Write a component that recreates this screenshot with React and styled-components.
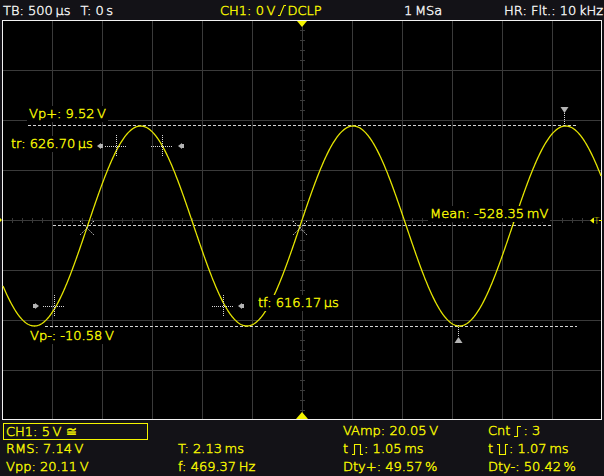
import React from 'react';
import styled, {createGlobalStyle} from 'styled-components';

const YELLOW = '#f4f400';
const TRACE = '#e4e400';
const GRID = '#3a3a3a';
const DOT = '#d4d4d4';
const MARK = '#b4b4b4';
const PANEL = '#131217';
const T = '\u2009'; // thin space between value and unit

// trace model: sine around the mean level, in screen pixels
const MEAN_Y = 226;
const AMP = 100;
const PERIOD = 212.5;
const PHASE = 87.5;
const traceY = x => MEAN_Y - AMP * Math.sin((2 * Math.PI * (x - PHASE)) / PERIOD);

const tracePath = (() => {
  let d = '';
  for (let x = 3; x <= 601; x += 0.5) {
    d += (x === 3 ? 'M' : 'L') + x + ' ' + traceY(x).toFixed(2) + ' ';
  }
  return d;
})();

const range = (from, to, step) => {
  const out = [];
  for (let v = from; v <= to; v += step) out.push(v);
  return out;
};

const GlobalStyle = createGlobalStyle`
  html, body {
    margin: 0;
    padding: 0;
    background: ${PANEL};
  }
  body {
    font-family: "DejaVu Sans", "Liberation Sans", sans-serif;
    font-weight: 300;
    -webkit-text-stroke: 0.45px currentColor;
  }
`;

const Screen = styled.div`
  width: 604px;
  height: 476px;
  display: flex;
  flex-direction: column;
  background: ${PANEL};
  overflow: hidden;
`;

const TopBar = styled.div`
  height: 20px;
  display: grid;
  grid-template-columns: 217px 184px 100px 1fr;
  align-items: center;
  padding-left: 3px;
  font-size: 13px;
  color: #f0f0f0;
  white-space: nowrap;
`;

const TopItem = styled.div`
  display: flex;
  align-items: center;
  color: ${p => p.$color || '#f0f0f0'};
`;

const Gap = styled.span`
  display: inline-block;
  width: ${p => p.$w}px;
`;

const Plot = styled.div`
  position: relative;
  height: 401px;
  background: ${PANEL};

  & > svg {
    display: block;
  }
`;

const Readout = styled.div`
  position: absolute;
  left: ${p => p.$x - 2}px;
  top: ${p => p.$y - 28}px;
  height: 16px;
  line-height: 16px;
  padding: 0 2px;
  background: #000;
  color: ${YELLOW};
  font-size: 13px;
  white-space: nowrap;
`;

const Panel = styled.div`
  flex: 1;
  display: grid;
  grid-template-columns: 172px 165px 145px 1fr;
  grid-auto-rows: 18px;
  padding: 1px 0 0 3px;
  font-size: 13px;
  color: ${YELLOW};
  white-space: nowrap;
`;

const Cell = styled.div`
  display: flex;
  align-items: center;
  padding-left: ${p => (p.$flush ? 0 : 3)}px;
  line-height: 18px;
`;

const ChannelBox = styled.div`
  width: 145px;
  height: 17px;
  box-sizing: border-box;
  border: 1px solid ${YELLOW};
  padding-left: 2px;
  line-height: 15px;
  display: flex;
  align-items: center;
`;

const Glyph = styled.svg`
  width: ${p => p.$w || 9}px;
  height: 11px;
  margin: 0 ${p => p.$right ?? 1}px 0 ${p => p.$left ?? 1}px;
  overflow: visible;
`;

const Slope = () => (
  <Glyph viewBox="0 0 8 11" $w={8} $left={3} $right={1}>
    <path d="M0 10.5 H2 L6 0.5 H8" fill="none" stroke={YELLOW} strokeWidth="1.1" />
  </Glyph>
);

const Edge = () => (
  <Glyph viewBox="0 0 8 11" $w={8} $left={4} $right={1}>
    <path d="M0 10.5 H3.5 V0.5 H7" fill="none" stroke={YELLOW} strokeWidth="1.1" />
  </Glyph>
);

const Pulse = ({invert}) => (
  <Glyph viewBox="0 0 11 11" $w={11} $left={4} $right={1}>
    <path
      d={invert ? 'M0 0.5 H2.5 V10.5 H8.5 V0.5 H11' : 'M0 10.5 H2.5 V0.5 H8.5 V10.5 H11'}
      fill="none"
      stroke={YELLOW}
      strokeWidth="1.1"
    />
  </Glyph>
);

// little gray pointer used on cursor ends
const Pointer = ({x, y, dir}) => {
  const s = dir === 'left' ? 1 : -1;
  return (
    <g fill={MARK}>
      <path d={`M${x} ${y} L${x + 4 * s} ${y - 3} L${x + 4 * s} ${y + 3} Z`} />
      <rect x={dir === 'left' ? x + 4 : x - 6} y={y - 2} width="2" height="4" />
    </g>
  );
};

const Cross = ({x, y, w = 11, h = 11}) => (
  <g stroke={DOT} strokeWidth="1" strokeDasharray="1 1" fill="none">
    <line x1={x - w} y1={y + 0.5} x2={x + w} y2={y + 0.5} />
    <line x1={x + 0.5} y1={y - h} x2={x + 0.5} y2={y + h} />
  </g>
);

const Ex = ({x, y}) => (
  <g stroke={DOT} strokeWidth="1" strokeDasharray="1.5 1.5" fill="none">
    <line x1={x - 7} y1={y - 7} x2={x + 7} y2={y + 7} />
    <line x1={x + 7} y1={y - 7} x2={x - 7} y2={y + 7} />
  </g>
);

const Level = ({y, from, to}) => (
  <line x1={from} y1={y + 0.5} x2={to} y2={y + 0.5} stroke={DOT} strokeWidth="1" strokeDasharray="3 2" />
);

const Scope = () => (
  <svg width="604" height="401" viewBox="0 20 604 401">
    <rect x="2" y="20" width="600" height="400" fill="#000" />
    <g stroke={GRID} strokeWidth="1">
      {range(52, 552, 50).map(x => (
        <line key={'v' + x} x1={x + 0.5} y1="20" x2={x + 0.5} y2="420" />
      ))}
      {range(70, 370, 50).map(y => (
        <line key={'h' + y} x1="2" y1={y + 0.5} x2="602" y2={y + 0.5} />
      ))}
      {range(12, 592, 10).map(x => (
        <line key={'tx' + x} x1={x + 0.5} y1="218" x2={x + 0.5} y2="223" />
      ))}
      {range(30, 410, 10).map(y => (
        <line key={'ty' + y} x1="300" y1={y + 0.5} x2="305" y2={y + 0.5} />
      ))}
    </g>
    <rect x="2.5" y="20.5" width="599" height="399" fill="none" stroke="#f2f2f2" strokeWidth="1" />

    <Level y={125} from={28} to={578} />
    <Level y={225} from={53} to={553} />
    <Level y={326} from={45} to={577} />

    <path d={tracePath} fill="none" stroke={TRACE} strokeWidth="1.3" />

    <Cross x={116} y={146} />
    <Cross x={162} y={146} />
    <Pointer x={97} y={146} dir="left" />
    <Pointer x={178} y={146} dir="left" />

    <Cross x={223} y={306} />
    <Pointer x={238} y={306} dir="left" />

    <Cross x={54} y={306} />
    <Pointer x={39} y={306} dir="right" />

    <Ex x={87} y={228} />
    <Ex x={300} y={228} />

    <g fill={MARK}>
      <path d="M560.5 107 L568.5 107 L564.5 113 Z" />
      <path d="M454.5 343 L462.5 343 L458.5 337 Z" />
    </g>
    <g stroke={DOT} strokeDasharray="1 1">
      <line x1="564.5" y1="113" x2="564.5" y2="127" />
      <line x1="458.5" y1="325" x2="458.5" y2="336" />
    </g>

    {/* trigger position and level markers */}
    <g fill={YELLOW}>
      <path d="M297 21 L307 21 L302 27 Z" />
      <path d="M296 419 L308 419 L302 412 Z" />
      <path d="M0 218 L2 220 L0 222 Z" />
      <path d="M590 220.5 L594 217.5 L594 223.5 Z" />
      <rect x="599" y="220" width="3" height="1" />
    </g>
    <text x="594" y="224" fill={YELLOW} fontSize="9" fontFamily="DejaVu Sans, sans-serif">T</text>
  </svg>
);

export default function App() {
  return (
    <Screen>
      <GlobalStyle />
      <TopBar>
        <TopItem>TB: 500{T}µs<Gap $w={10} />T: 0{T}s</TopItem>
        <TopItem $color={YELLOW}>CH1: 0{T}V<Slope />DCLP</TopItem>
        <TopItem>1{T}MSa</TopItem>
        <TopItem>HR: Flt.: 10{T}kHz</TopItem>
      </TopBar>

      <Plot>
        <Scope />
        <Readout $x={29} $y={114}>Vp+: 9.52{T}V</Readout>
        <Readout $x={11} $y={144}>tr: 626.70{T}µs</Readout>
        <Readout $x={430} $y={214}>Mean: -528.35{T}mV</Readout>
        <Readout $x={258} $y={303}>tf: 616.17{T}µs</Readout>
        <Readout $x={30} $y={336}>Vp-: -10.58{T}V</Readout>
      </Plot>

      <Panel>
        <Cell $flush>
          <ChannelBox>CH1: 5{T}V ≅</ChannelBox>
        </Cell>
        <Cell />
        <Cell>VAmp: 20.05{T}V</Cell>
        <Cell>Cnt<Edge />: 3</Cell>

        <Cell>RMS: 7.14{T}V</Cell>
        <Cell>T: 2.13{T}ms</Cell>
        <Cell>t<Pulse />: 1.05{T}ms</Cell>
        <Cell>t<Pulse invert />: 1.07{T}ms</Cell>

        <Cell>Vpp: 20.11{T}V</Cell>
        <Cell>f: 469.37{T}Hz</Cell>
        <Cell>Dty+: 49.57{T}%</Cell>
        <Cell>Dty-: 50.42{T}%</Cell>
      </Panel>
    </Screen>
  );
}
